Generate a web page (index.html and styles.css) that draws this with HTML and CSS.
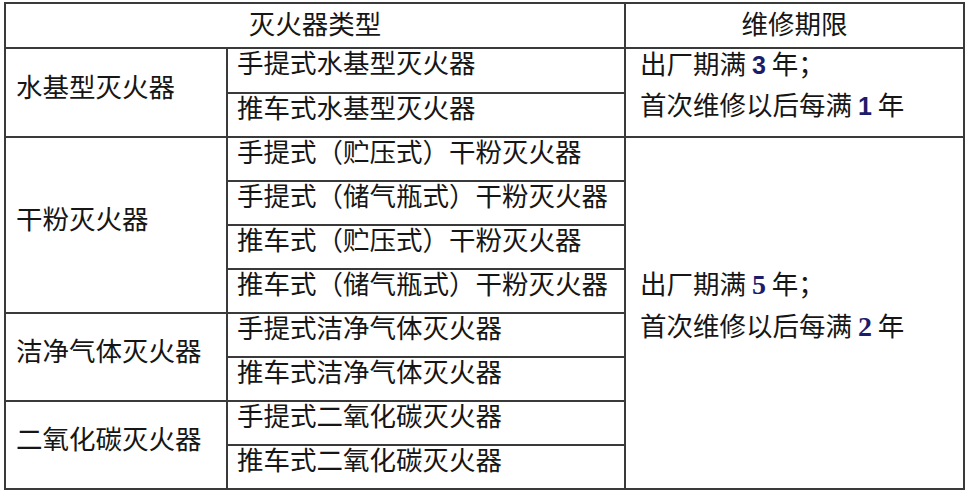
FILE: index.html
```html
<!DOCTYPE html>
<html lang="zh-CN">
<head>
<meta charset="utf-8">
<title>灭火器维修期限</title>
<link rel="stylesheet" href="styles.css">
</head>
<body>
<table class="ext">
  <colgroup>
    <col class="c1">
    <col class="c2">
    <col class="c3">
  </colgroup>
  <thead>
    <tr class="head">
      <th colspan="2">灭火器类型</th>
      <th>维修期限</th>
    </tr>
  </thead>
  <tbody>
    <tr>
      <td rowspan="2" class="group">水基型灭火器</td>
      <td class="item">手提式水基型灭火器</td>
      <td rowspan="2" class="term">
        <p>出厂期满 <b class="num sans">3</b> 年；</p>
        <p>首次维修以后每满 <b class="num sans">1</b> 年</p>
      </td>
    </tr>
    <tr><td class="item">推车式水基型灭火器</td></tr>
    <tr>
      <td rowspan="4" class="group">干粉灭火器</td>
      <td class="item">手提式（贮压式）干粉灭火器</td>
      <td rowspan="8" class="term">
        <p>出厂期满 <b class="num serif">5</b> 年；</p>
        <p>首次维修以后每满 <b class="num serif">2</b> 年</p>
      </td>
    </tr>
    <tr><td class="item">手提式（储气瓶式）干粉灭火器</td></tr>
    <tr><td class="item">推车式（贮压式）干粉灭火器</td></tr>
    <tr><td class="item">推车式（储气瓶式）干粉灭火器</td></tr>
    <tr>
      <td rowspan="2" class="group">洁净气体灭火器</td>
      <td class="item">手提式洁净气体灭火器</td>
    </tr>
    <tr><td class="item">推车式洁净气体灭火器</td></tr>
    <tr>
      <td rowspan="2" class="group">二氧化碳灭火器</td>
      <td class="item">手提式二氧化碳灭火器</td>
    </tr>
    <tr><td class="item">推车式二氧化碳灭火器</td></tr>
  </tbody>
</table>
</body>
</html>
```
FILE: styles.css
```css
html, body {
  margin: 0;
  padding: 0;
  background: #ffffff;
}

body {
  padding: 2px 0 0 4px;
  font-family: "Noto Sans CJK SC", "Noto Sans", sans-serif;
  font-size: 26.5px;
  color: #161616;
}

.ext {
  border-collapse: collapse;
  table-layout: fixed;
  width: 959px;
}

.c1 { width: 222px; }
.c2 { width: 398px; }
.c3 { width: 339px; }

.ext th,
.ext td {
  border: 2px solid #3a3a3a;
  padding: 0 0 16px 0;
  line-height: 26px;
  height: 26px;
  text-align: left;
  vertical-align: middle;
  white-space: nowrap;
  font-weight: normal;
}

.ext .head th {
  height: 38px;
  line-height: 30px;
  text-align: center;
  padding: 0 0 5px 0;
}

.ext td.group {
  padding-left: 10px;
  padding-bottom: 14px;
}

.ext td.item {
  padding-left: 9px;
}

.ext td.term {
  padding: 0 0 17px 14px;
}

.term p {
  margin: 0;
  line-height: 28px;
}

.term p + p {
  margin-top: 12px;
}

.num {
  color: #1c1c6c;
  font-weight: bold;
  line-height: 1;
}

.num.sans {
  font-family: "Liberation Sans", Arial, sans-serif;
  font-size: 25px;
}

.num.serif {
  font-family: "Liberation Serif", "Times New Roman", serif;
  font-size: 28px;
}
```
